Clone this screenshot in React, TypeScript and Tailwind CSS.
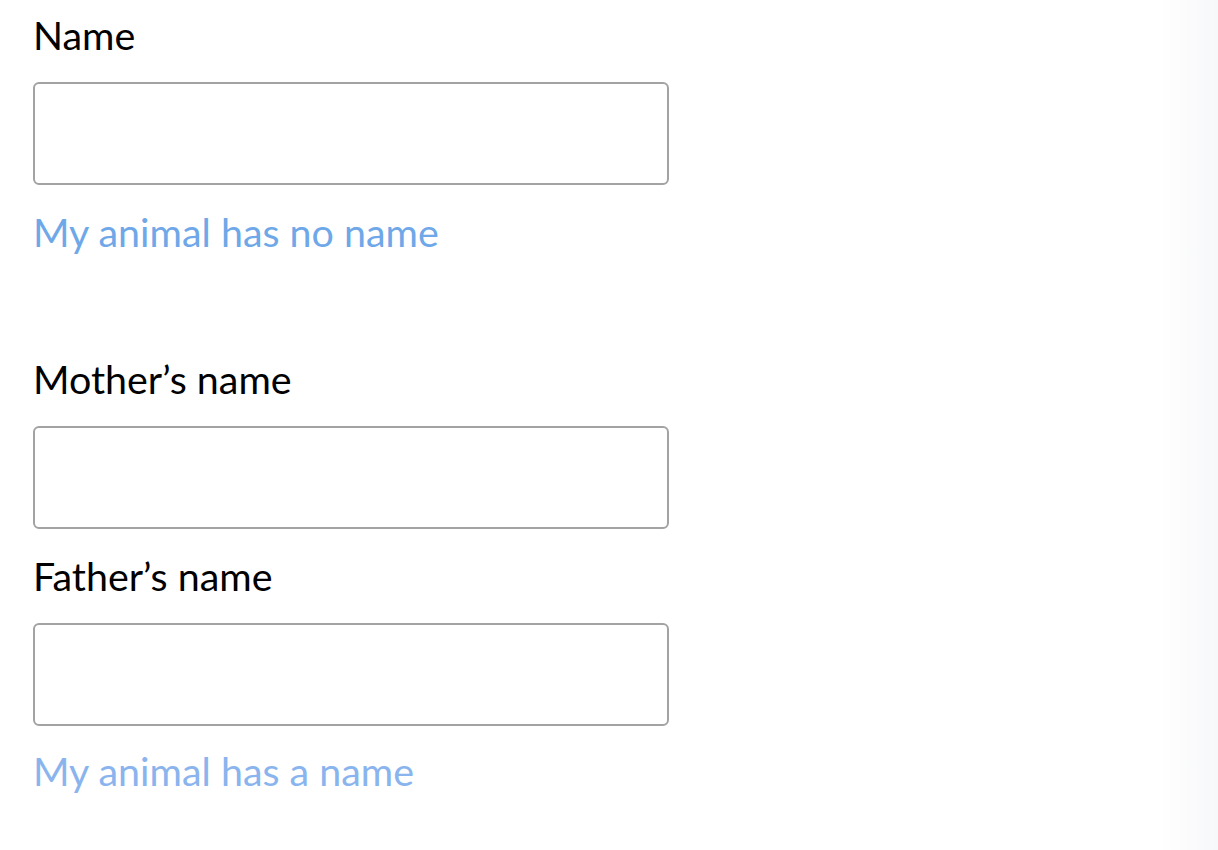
import React from "react";

function Field({ label }: { label: string }) {
    return (
        <div className="flex flex-col">
            <label className="text-[39.4px] leading-[48px] text-black">{label}</label>
            <input
                type="text"
                className="mt-[23px] block h-[103px] w-[636px] rounded-[6px] border-2 border-[#a3a3a3] bg-white px-4 text-[36px] outline-none"
            />
        </div>
    );
}

export default function App() {
    return (
        <div
            className="relative min-h-[850px] w-full bg-white"
            style={{ fontFamily: "Lato, 'Open Sans', sans-serif" }}
        >
            <div className="absolute right-0 top-0 h-full w-[60px] bg-gradient-to-r from-white to-[#f7f8fa]" />
            <div className="relative flex flex-col px-[33px] pt-[11px]">
                <Field label="Name" />
                <a className="mt-[23px] text-[39.4px] leading-[48px] text-[#6fa8e8]" href="#">
                    My animal has no name
                </a>
                <div className="mt-[99px]">
                    <Field label="Mother’s name" />
                </div>
                <div className="mt-[23px]">
                    <Field label="Father’s name" />
                </div>
                <a className="mt-[21px] text-[39.4px] leading-[48px] text-[#8ab4ee]" href="#">
                    My animal has a name
                </a>
            </div>
        </div>
    );
}
